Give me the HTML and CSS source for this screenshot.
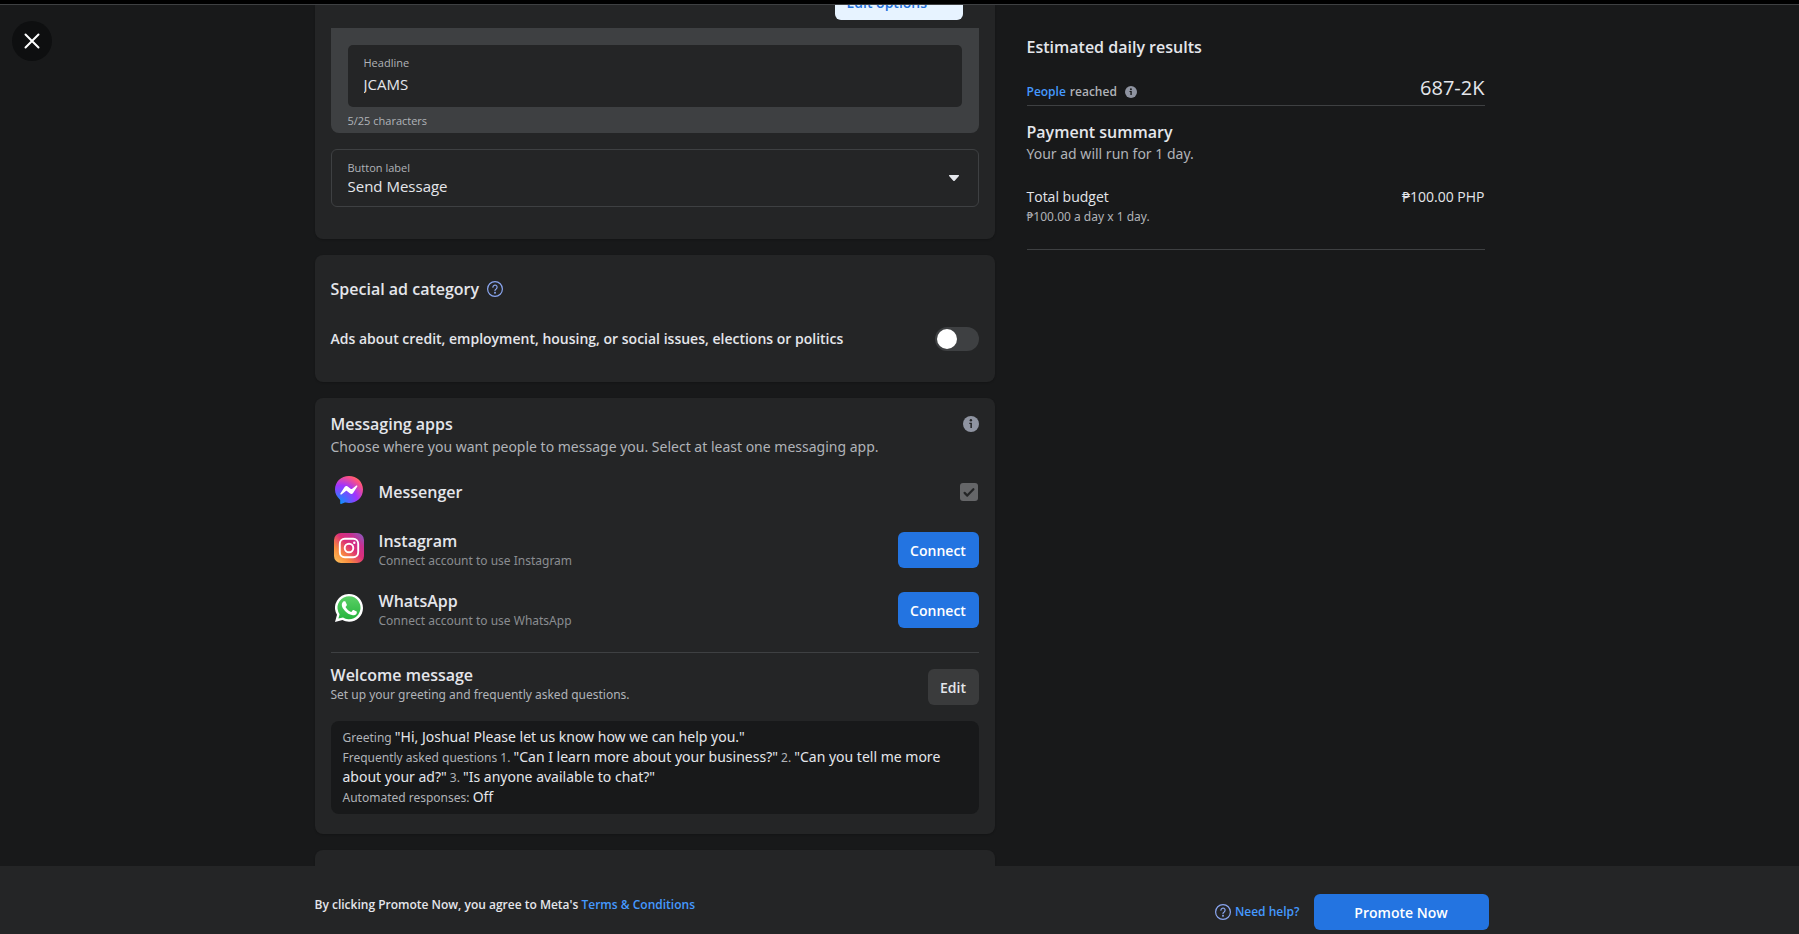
FILE: index.html
```html
<!DOCTYPE html>
<html lang="en">
<head>
<meta charset="utf-8">
<meta name="viewport" content="width=device-width, initial-scale=1">
<title>Promote</title>
<link rel="stylesheet" href="styles.css">
</head>
<body>
<div class="topbar"></div>
<button class="close" type="button" aria-label="Close">
  <svg width="16" height="16" viewBox="0 0 16 16" fill="none" stroke="#fff" stroke-width="2" stroke-linecap="round"><path d="M1.5 1.5l13 13M14.5 1.5l-13 13"/></svg>
</button>

<main class="scroller">
  <div class="columns">
    <div class="settings">
      <section class="card card-creative">
        <div class="options-row">
          <button class="btn btn-options" type="button">Edit options</button>
        </div>
        <div class="headline-panel">
          <div class="text-field">
            <label class="field-label" for="headline">Headline</label>
            <input class="field-input" id="headline" type="text" maxlength="25" value="JCAMS">
          </div>
          <div class="char-count">5/25 characters</div>
        </div>
        <div class="select-field">
          <div class="select-main">
            <label class="field-label" for="button-label">Button label</label>
            <select class="field-select" id="button-label"><option>Send Message</option></select>
          </div>
          <svg width="12" height="8" viewBox="0 0 12 8"><path d="M1.6 1h8.8a.6.6 0 0 1 .5 1L6.700 6.700a1 1 0 0 1-1.400 0L1.100 2a.6.6 0 0 1 .5-1z" fill="#e4e6eb"/></svg>
        </div>
      </section>

      <section class="card card-category">
        <h2 class="title title-icon">Special ad category
          <svg width="16" height="16" viewBox="0 0 16 16" fill="none" stroke="#8aa6f0" stroke-width="1.200" stroke-linecap="round"><circle cx="8" cy="8" r="7.400"/><path d="M5.900 6.200a2.100 2.100 0 1 1 3.300 1.700C8.400 8.400 8 8.700 8 9.600"/><circle cx="8" cy="11.800" r=".4" fill="#8aa6f0"/></svg>
        </h2>
        <div class="toggle-row">
          <label for="special">Ads about credit, employment, housing, or social issues, elections or politics</label>
          <input class="toggle" id="special" type="checkbox" role="switch">
        </div>
      </section>

      <section class="card card-apps">
        <div class="card-head">
          <h2 class="title">Messaging apps</h2>
          <svg width="16" height="16" viewBox="0 0 16 16"><circle cx="8" cy="8" r="8" fill="#8f94a1"/><circle cx="7.900" cy="4.300" r="1.200" fill="#242526"/><path d="M6.300 6.700h2.600v5.300H7.400V8H6.300z" fill="#242526"/></svg>
        </div>
        <p class="desc">Choose where you want people to message you. Select at least one messaging app.</p>

        <div class="apps">
          <div class="app">
            <span class="app-icon">
              <svg width="28" height="28" viewBox="0 0 28 28">
                <defs><radialGradient id="msg" cx="0.15" cy="1" r="1.150"><stop offset="0" stop-color="#0099ff"/><stop offset=".58" stop-color="#a033ff"/><stop offset=".9" stop-color="#ff5280"/><stop offset="1" stop-color="#ff7061"/></radialGradient></defs>
                <path d="M14 0C6.100 0 0 5.800 0 13.600c0 4.100 1.900 7.400 4.800 9.800.3.300.4.500.4.900v2.900c0 .6.300.9.900.7l3.800-1.300c.3-.1.500-.1.700 0 1.100.3 2.200.4 3.400.4 7.900 0 14-5.600 14-13.400S21.900 0 14 0z" fill="url(#msg)"/>
                <path d="M5.400 17.500l4.200-6.500c.7-1 2-1.300 3-.6l3.300 2.500c.3.200.7.200 1 0l4.400-3.400c.6-.4 1.400.3 1 .9l-4.200 6.500c-.6 1-2 1.300-3 .6l-3.200-2.500c-.3-.2-.7-.2-1 0l-4.500 3.400c-.6.400-1.400-.3-1-.9z" fill="#fff"/>
              </svg>
            </span>
            <div class="app-text"><label class="title" for="messenger">Messenger</label></div>
            <span class="check">
              <input class="check-box" id="messenger" type="checkbox" checked disabled>
              <svg class="check-mark" width="18" height="18" viewBox="0 0 18 18" fill="none" stroke="#242526" stroke-width="2.200" stroke-linecap="round" stroke-linejoin="round"><path d="M4.600 9.900l2.700 2.700 6.100-6.400"/></svg>
            </span>
          </div>
          <div class="app">
            <span class="app-icon">
              <svg width="30" height="30" viewBox="0 0 30 30">
                <defs>
                  <linearGradient id="ig1" x1="0" y1="1" x2="1" y2="0"><stop offset="0" stop-color="#fdc85c"/><stop offset=".28" stop-color="#f98b3f"/><stop offset=".55" stop-color="#dc2f78"/><stop offset=".75" stop-color="#c83091"/><stop offset="1" stop-color="#7e62c8"/></linearGradient>
                </defs>
                <rect width="30" height="30" rx="7" fill="url(#ig1)"/>
                <rect x="5.800" y="5.800" width="18.400" height="18.400" rx="5" fill="none" stroke="#fff" stroke-width="1.900"/>
                <circle cx="15" cy="15" r="4.300" fill="none" stroke="#fff" stroke-width="1.900"/>
                <circle cx="20.300" cy="9.700" r="1.200" fill="#fff"/>
              </svg>
            </span>
            <div class="app-text"><div class="title">Instagram</div><div class="app-note">Connect account to use Instagram</div></div>
            <button class="btn btn-primary" type="button">Connect</button>
          </div>
          <div class="app">
            <span class="app-icon">
              <svg width="28" height="28" viewBox="0 0 28 28">
                <defs><linearGradient id="wa" x1="0" y1="0" x2="0" y2="1"><stop offset="0" stop-color="#5bd066"/><stop offset="1" stop-color="#27b43e"/></linearGradient></defs>
                <path d="M0 28l2-7.200A13.800 13.800 0 0 1 14.100 0C21.800 0 28 6.200 28 13.900s-6.200 13.900-13.900 13.900c-2.300 0-4.600-.6-6.600-1.700z" fill="#fff"/>
                <path d="M3.400 24.600l1.200-4.300A11.500 11.500 0 1 1 8 23.500z" fill="url(#wa)"/>
                <path d="M10.600 7.900c-.3-.6-.5-.6-.8-.6h-.7c-.3 0-.7.100-1 .5-.4.400-1.300 1.300-1.300 3.100s1.300 3.600 1.500 3.800c.2.200 2.600 4.100 6.300 5.600 3.200 1.200 3.800 1 4.500.9.700-.1 2.200-.9 2.500-1.800.3-.9.300-1.600.2-1.800-.1-.2-.3-.3-.7-.4l-2.500-1.200c-.4-.1-.6-.2-.9.200l-1.100 1.500c-.2.200-.4.300-.8.100-.4-.2-1.600-.6-3-1.900-1.100-1-1.900-2.200-2.100-2.600-.2-.4 0-.6.200-.8l.5-.6.400-.6c.1-.2.100-.5 0-.7z" fill="#fff"/>
              </svg>
            </span>
            <div class="app-text"><div class="title">WhatsApp</div><div class="app-note">Connect account to use WhatsApp</div></div>
            <button class="btn btn-primary" type="button">Connect</button>
          </div>
        </div>

        <div class="welcome">
          <div class="welcome-text">
            <h2 class="title">Welcome message</h2>
            <p class="small">Set up your greeting and frequently asked questions.</p>
          </div>
          <button class="btn btn-edit" type="button">Edit</button>
        </div>
        <div class="summary">
          <div>Greeting <b>"Hi, Joshua! Please let us know how we can help you."</b></div>
          <div>Frequently asked questions 1. <b>"Can I learn more about your business?"</b> 2. <b>"Can you tell me more about your ad?"</b> 3. <b>"Is anyone available to chat?"</b></div>
          <div>Automated responses: <b>Off</b></div>
        </div>
      </section>

      <section class="card card-next"></section>
    </div>

    <aside class="results">
      <h2 class="title">Estimated daily results</h2>
      <div class="reach">
        <div class="reach-label"><a class="link" href="#">People</a> reached
          <svg width="12" height="12" viewBox="0 0 16 16"><circle cx="8" cy="8" r="8" fill="#8f94a1"/><circle cx="7.900" cy="4.300" r="1.300" fill="#18191a"/><path d="M6 6.700h3v5.300H7.200V8H6z" fill="#18191a"/></svg>
        </div>
        <div class="reach-value">687-2K</div>
      </div>
      <h2 class="title">Payment summary</h2>
      <p class="desc run">Your ad will run for 1 day.</p>
      <div class="budget">
        <div class="budget-line"><span>Total budget</span><span>₱100.00 PHP</span></div>
        <p class="small">₱100.00 a day x 1 day.</p>
      </div>
    </aside>
  </div>
</main>

<footer class="footer">
  <div class="footer-inner">
    <p class="agree">By clicking Promote Now, you agree to Meta's <a class="link" href="#">Terms &amp; Conditions</a></p>
    <div class="actions">
      <a class="link help" href="#">
        <svg width="16" height="16" viewBox="0 0 16 16" fill="none" stroke="#8aa6f0" stroke-width="1.200" stroke-linecap="round"><circle cx="8" cy="8" r="7.400"/><path d="M5.900 6.200a2.100 2.100 0 1 1 3.300 1.700C8.400 8.400 8 8.700 8 9.600"/><circle cx="8" cy="11.800" r=".4" fill="#8aa6f0"/></svg>
        Need help?</a>
      <button class="btn btn-primary btn-promote" type="button">Promote Now</button>
    </div>
  </div>
</footer>
</body>
</html>
```
FILE: styles.css
```css
* { box-sizing: border-box; }

body {
  margin: 0;
  height: 100vh;
  display: flex;
  flex-direction: column;
  overflow: hidden;
  background: #18191a;
  color: #e4e6eb;
  font-family: "Open Sans", "Noto Sans", sans-serif;
  font-size: 14px;
  line-height: 20px;
}

h2, p { margin: 0; }
svg { display: block; flex: none; }
button, input, select { font: inherit; color: inherit; margin: 0; }

.topbar {
  flex: none;
  height: 5px;
  background: #000;
  border-bottom: 1px solid #3e4042;
}

.close {
  position: absolute;
  top: 21px;
  left: 12px;
  width: 40px;
  height: 40px;
  padding: 0;
  display: grid;
  place-items: center;
  border: 0;
  border-radius: 50%;
  background: #0e0f10;
}

.scroller { flex: 1; min-height: 0; overflow: hidden; }

.columns {
  max-width: 1170px;
  margin: 0 auto;
  display: flex;
  gap: 32px;
}

.settings {
  flex: 0 1 680px;
  min-width: 0;
  display: flex;
  flex-direction: column;
  gap: 16px;
}

.card {
  padding: 16px 16px 20px;
  border-radius: 8px;
  background: #242526;
  box-shadow: 0 1px 2px rgba(0, 0, 0, 0.2);
}

.title {
  font-size: 16px;
  line-height: 20px;
  font-weight: 600;
}
.desc, .small, .app-note, .summary { font-family: "Noto Sans", "Open Sans", sans-serif; }
.desc { color: #b0b3b8; }
.small { font-size: 12px; color: #b0b3b8; }
.link { color: #4599ff; text-decoration: none; }

.btn {
  height: 36px;
  padding: 2px 12px 0;
  border: 0;
  border-radius: 6px;
  font-weight: 600;
}
.btn-primary { min-width: 81px; background: #2374e1; color: #fff; }
.btn-edit { min-width: 51px; background: #3a3b3c; }

/* Ad creative */
.card-creative { padding: 0 16px 32px; border-radius: 0 0 8px 8px; }
.options-row {
  display: flex;
  justify-content: flex-end;
  margin-top: -21px;
  padding: 0 16px 8px;
}
.btn-options {
  width: 128px;
  text-align: left;
  background: #e7f3ff;
  color: #216fdb;
}
.headline-panel {
  padding: 17px 17px 4px;
  border-radius: 0 0 8px 8px;
  background: #3e4042;
}
.text-field {
  display: flex;
  flex-direction: column;
  gap: 3px;
  padding: 10px 16px 13px;
  border-radius: 5px;
  background: #242526;
}
.field-label, .char-count {
  font-size: 11px;
  line-height: 16px;
  color: #b0b3b8;
}
.field-input, .field-select {
  width: 100%;
  height: 20px;
  padding: 0;
  border: 0;
  background: transparent;
  font-size: 15px;
  appearance: none;
}
.char-count { margin-top: 6px; }
.select-field {
  display: flex;
  align-items: center;
  margin-top: 16px;
  padding: 10px 18px 10px 16px;
  border: 1px solid #3e4042;
  border-radius: 6px;
}
.select-main { flex: 1; display: flex; flex-direction: column; }

/* Special ad category */
.card-category { padding: 24px 16px 31px; }
.title-icon { display: flex; align-items: center; gap: 8px; }
.toggle-row {
  display: flex;
  align-items: center;
  justify-content: space-between;
  margin-top: 28px;
  font-weight: 600;
}
.toggle {
  flex: none;
  width: 44px;
  height: 24px;
  padding: 2px;
  border-radius: 12px;
  background: #3e4042;
  appearance: none;
}
.toggle::before {
  content: "";
  display: block;
  width: 20px;
  height: 20px;
  border-radius: 50%;
  background: #fff;
}
.toggle:checked::before { margin-left: auto; }

/* Messaging apps */
.card-head {
  display: flex;
  align-items: center;
  justify-content: space-between;
  margin-bottom: 3px;
}
.apps {
  display: flex;
  flex-direction: column;
  gap: 18px;
  padding: 15px 0 21px;
  border-bottom: 1px solid #3e4042;
}
.app { display: flex; align-items: center; min-height: 39px; }
.app-icon {
  width: 36px;
  padding-bottom: 4px;
  display: grid;
  justify-items: center;
}
.app-text { flex: 1; padding: 2px 0 0 12px; }
.app-note { font-size: 12px; color: #8a8d91; }
.check { display: grid; margin-right: 1px; }
.check > * { grid-area: 1 / 1; }
.check-box {
  width: 18px;
  height: 18px;
  border-radius: 3px;
  background: #656668;
  appearance: none;
}
.check-mark { pointer-events: none; }

.welcome {
  display: flex;
  justify-content: space-between;
  align-items: flex-end;
  padding: 12px 0 16px;
}
.summary {
  padding: 7px 12px 6px;
  border-radius: 8px;
  background: #18191a;
  color: #b0b3b8;
  font-size: 12px;
  line-height: 20px;
}
.summary b {
  font-size: 14px;
  line-height: 18px;
  font-weight: 400;
  color: #e4e6eb;
}
.card-next { min-height: 80px; }

/* Results column */
.results { flex: 1; padding-top: 32px; }
.reach {
  display: flex;
  justify-content: space-between;
  align-items: flex-end;
  margin: 17px 0 16px;
  padding-bottom: 3px;
  border-bottom: 1px solid #3e4042;
}
.reach-label {
  display: flex;
  align-items: center;
  gap: 4px;
  font-size: 12px;
  font-weight: 600;
  color: #b0b3b8;
}
.reach-label svg { margin-left: 4px; }
.reach-value { font-size: 20px; line-height: 28px; }
.run { margin-top: 2px; }
.budget {
  margin-top: 23px;
  padding-bottom: 22px;
  border-bottom: 1px solid #3e4042;
}
.budget-line { display: flex; justify-content: space-between; }

/* Footer */
.footer { flex: none; background: #242526; }
.footer-inner {
  max-width: 1170px;
  margin: 0 auto;
  display: flex;
  justify-content: space-between;
  padding: 28px 0 4px;
}
.agree { padding-top: 1px; font-size: 12px; font-weight: 600; }
.actions {
  display: flex;
  align-items: center;
  gap: 14px;
  margin-right: -4px;
}
.help {
  display: flex;
  align-items: center;
  gap: 4px;
  font-size: 12px;
  font-weight: 600;
}
.btn-promote { width: 175px; }
```
